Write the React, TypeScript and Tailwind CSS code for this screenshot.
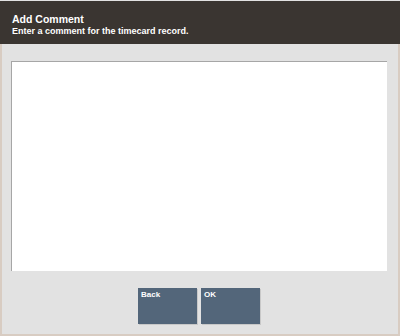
import React from "react";

const Button = ({ label }: { label: string }) => (
  <button className="flex h-[36px] w-[59px] items-start bg-[#53667a] px-[3px] pt-[3px] text-[8px] font-bold leading-none text-white shadow-[1px_1px_0_#c8c8c8]">
    {label}
  </button>
);

export default function App() {
  return (
    <div
      className="flex h-[336px] w-[400px] flex-col bg-[#e2e2e2] pt-[1px]"
      style={{ fontFamily: '"Liberation Sans", Arial, sans-serif' }}
    >
      <div className="h-[43px] bg-[#3a3531] px-[12px] pt-[13px] text-white">
        <div className="text-[10.5px] font-bold leading-[10px]">Add Comment</div>
        <div className="mt-[2px] text-[9px] font-bold leading-[10px]">
          Enter a comment for the timecard record.
        </div>
      </div>
      <div className="flex flex-1 flex-col border-x-[2px] border-b-[2px] border-x-[#d8ccc2] border-b-[#d8ccc2] pl-[9px] pr-[11px]">
        <div className="mt-[17px] h-[210px] border-t border-l border-[#a6a6a6] bg-white" />
        <div className="mt-[17px] flex gap-[4px] pl-[127px]">
          <Button label="Back" />
          <Button label="OK" />
        </div>
      </div>
    </div>
  );
}
